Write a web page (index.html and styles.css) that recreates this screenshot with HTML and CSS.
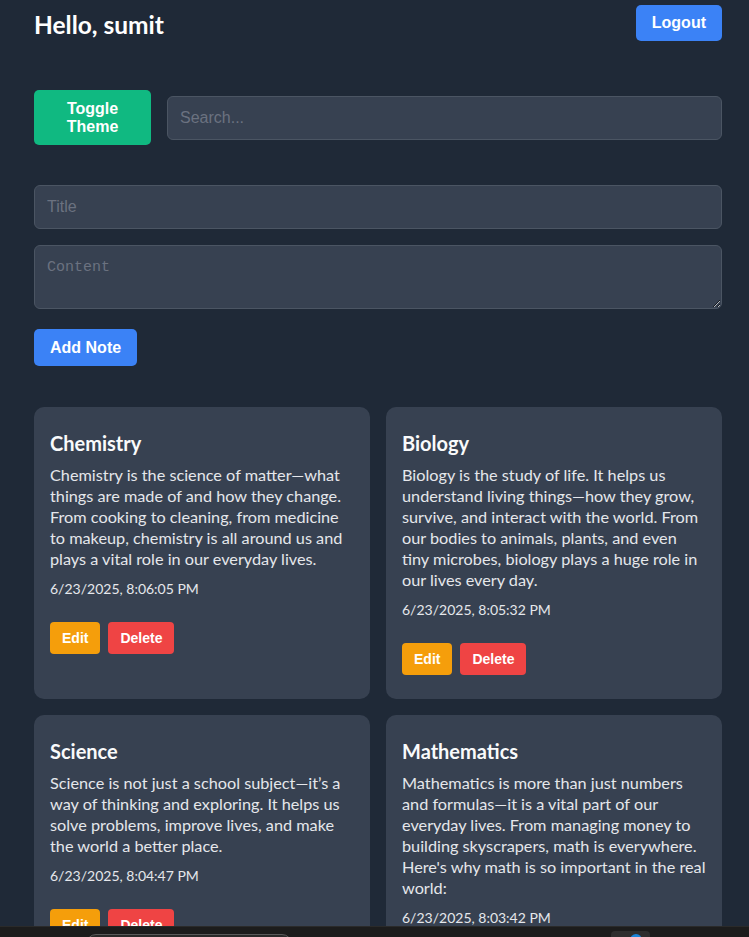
FILE: index.html
```html
<!DOCTYPE html>
<html lang="en">
<head>
<meta charset="utf-8">
<title>Notes</title>
<link rel="stylesheet" href="styles.css">
</head>
<body>
<div class="app">
  <header class="topbar">
    <h1 class="greeting">Hello, sumit</h1>
    <button class="btn btn-blue btn-logout">Logout</button>
  </header>

  <div class="toolbar">
    <button class="btn btn-green btn-toggle">Toggle Theme</button>
    <input class="field search" type="text" placeholder="Search...">
  </div>

  <form class="note-form">
    <input class="field" type="text" placeholder="Title">
    <textarea class="field content-area" placeholder="Content"></textarea>
    <div class="form-actions">
      <button type="button" class="btn btn-blue btn-add">Add Note</button>
    </div>
  </form>

  <section class="notes">
    <article class="card">
      <h2 class="card-title">Chemistry</h2>
      <p class="card-text">Chemistry is the science of matter—what things are made of and how they change. From cooking to cleaning, from medicine to makeup, chemistry is all around us and plays a vital role in our everyday lives.</p>
      <p class="card-date">6/23/2025, 8:06:05 PM</p>
      <div class="card-actions">
        <button class="btn-sm btn-yellow">Edit</button>
        <button class="btn-sm btn-red">Delete</button>
      </div>
    </article>
    <article class="card">
      <h2 class="card-title">Biology</h2>
      <p class="card-text">Biology is the study of life. It helps us understand living things—how they grow, survive, and interact with the world. From our bodies to animals, plants, and even tiny microbes, biology plays a huge role in our lives every day.</p>
      <p class="card-date">6/23/2025, 8:05:32 PM</p>
      <div class="card-actions">
        <button class="btn-sm btn-yellow">Edit</button>
        <button class="btn-sm btn-red">Delete</button>
      </div>
    </article>
    <article class="card">
      <h2 class="card-title">Science</h2>
      <p class="card-text">Science is not just a school subject—it’s a way of thinking and exploring. It helps us solve problems, improve lives, and make the world a better place.</p>
      <p class="card-date">6/23/2025, 8:04:47 PM</p>
      <div class="card-actions">
        <button class="btn-sm btn-yellow">Edit</button>
        <button class="btn-sm btn-red">Delete</button>
      </div>
    </article>
    <article class="card">
      <h2 class="card-title">Mathematics</h2>
      <p class="card-text">Mathematics is more than just numbers and formulas—it is a vital part of our everyday lives. From managing money to building skyscrapers, math is everywhere. Here's why math is so important in the real world:</p>
      <p class="card-date">6/23/2025, 8:03:42 PM</p>
      <div class="card-actions">
        <button class="btn-sm btn-yellow">Edit</button>
        <button class="btn-sm btn-red">Delete</button>
      </div>
    </article>
  </section>
</div>

<div class="taskbar">
  <div class="taskbar-search"></div>
  <div class="taskbar-app"><span class="taskbar-dot"></span></div>
</div>
</body>
</html>
```
FILE: styles.css
```css
html, body {
  margin: 0;
  padding: 0;
}

body {
  background: #1f2937;
  color: #f3f4f6;
  font-family: Lato, "Noto Sans", sans-serif;
  overflow: hidden;
}

.app {
  padding: 5px 27px 40px 34px;
}

/* header */
.topbar {
  display: flex;
  justify-content: space-between;
  align-items: flex-end;
}

.greeting {
  margin: 0;
  font-size: 24.5px;
  line-height: 32px;
  font-weight: 700;
  color: #ffffff;
}

/* buttons */
.btn {
  font-family: "Liberation Sans", Arial, sans-serif;
  font-weight: 700;
  font-size: 16px;
  line-height: normal;
  color: #ffffff;
  border: 0;
  border-radius: 5px;
  padding: 9px 16px;
  cursor: pointer;
}

.btn-blue { background: #3b82f6; }
.btn-green { background: #10b981; }

.btn-logout { height: 36px; padding-top: 0; padding-bottom: 0; }

/* toolbar */
.toolbar {
  display: flex;
  align-items: center;
  gap: 16px;
  margin-top: 49px;
}

.btn-toggle {
  width: 117px;
  flex: 0 0 117px;
  height: 55px;
  padding: 0 12px;
  line-height: 18px;
}

.field {
  display: block;
  box-sizing: border-box;
  width: 100%;
  height: 44px;
  margin: 0;
  padding: 12px;
  background: #374151;
  border: 1px solid #4b5563;
  border-radius: 6px;
  color: #f3f4f6;
  font-family: "Liberation Sans", Arial, sans-serif;
  font-size: 16px;
  outline: none;
}

.field::placeholder {
  color: #6b7280;
}

.search {
  flex: 1;
  width: auto;
}

/* form */
.note-form {
  display: flex;
  flex-direction: column;
  gap: 16px;
  margin-top: 40px;
}

.content-area {
  height: 64px;
  font-family: "Liberation Mono", "Courier New", monospace;
  font-size: 15px;
  line-height: 20px;
  resize: vertical;
}

.form-actions {
  margin-top: 4px;
}

.btn-add {
  height: 37px;
  padding-top: 0;
  padding-bottom: 0;
}

/* notes grid */
.notes {
  display: grid;
  grid-template-columns: 1fr 1fr;
  gap: 16px;
  margin-top: 41px;
}

.card {
  background: #374151;
  border-radius: 10px;
  padding: 22px 16px 24px;
}

.card-title {
  margin: 0;
  font-size: 20px;
  line-height: 28px;
  font-weight: 700;
  color: #f9fafb;
}

.card-text {
  margin: 7px 0 0;
  font-size: 16.25px;
  line-height: 21px;
  color: #e5e7eb;
}

.card-date {
  margin: 10px 0 0;
  font-size: 14px;
  line-height: 20px;
  color: #e5e7eb;
}

.card-actions {
  display: flex;
  gap: 8px;
  margin-top: 23px;
}

.btn-sm {
  font-family: "Liberation Sans", Arial, sans-serif;
  font-weight: 700;
  font-size: 14px;
  line-height: 16px;
  color: #ffffff;
  border: 0;
  border-radius: 4px;
  padding: 8px 12px;
  cursor: pointer;
}

.btn-yellow { background: #f59e0b; }
.btn-red { background: #ef4444; }

/* OS taskbar strip overlaying the bottom of the window */
.taskbar {
  position: fixed;
  left: 0;
  right: 0;
  bottom: 0;
  height: 10px;
  background: #1c1c1c;
  border-top: 1px solid #2a2a2a;
}

.taskbar-search {
  position: absolute;
  left: 86px;
  top: 7px;
  width: 204px;
  height: 20px;
  border: 1px solid #5a5a5a;
  border-radius: 10px;
  background: #2a2a2a;
}

.taskbar-app {
  position: absolute;
  left: 611px;
  top: 4px;
  width: 39px;
  height: 20px;
  border-radius: 4px;
  background: #2e2e2e;
}

.taskbar-dot {
  position: absolute;
  left: 19px;
  top: 3px;
  width: 12px;
  height: 12px;
  border-radius: 50%;
  background: #1a84d8;
}
```
